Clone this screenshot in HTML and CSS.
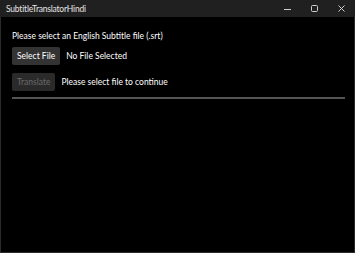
FILE: index.html
```html
<!DOCTYPE html>
<html>
<head>
<meta charset="utf-8">
<link rel="stylesheet" href="styles.css">
</head>
<body>
<div class="window">
  <div class="titlebar">
    <span class="title">SubtitleTranslatorHindi</span>
    <div class="controls">
      <span class="ctl"><svg width="10" height="10" viewBox="0 0 10 10"><path d="M1 5.5h7" stroke="#cfcfcf" stroke-width="1"/></svg></span>
      <span class="ctl"><svg width="10" height="10" viewBox="0 0 10 10"><rect x="1.5" y="1.5" width="6" height="6" rx="1" fill="none" stroke="#cfcfcf" stroke-width="1"/></svg></span>
      <span class="ctl"><svg width="10" height="10" viewBox="0 0 10 10"><path d="M1.5 1.5l6 6M7.5 1.5l-6 6" stroke="#cfcfcf" stroke-width="1"/></svg></span>
    </div>
  </div>
  <div class="content">
    <div class="prompt">Please select an English Subtitle file (.srt)</div>
    <div class="row">
      <button class="btn">Select File</button>
      <span class="status">No File Selected</span>
    </div>
    <div class="row">
      <button class="btn disabled">Translate</button>
      <span class="status">Please select file to continue</span>
    </div>
    <div class="progress"></div>
  </div>
</div>
</body>
</html>
```
FILE: styles.css
```css
html, body {
  margin: 0;
  padding: 0;
  background: #000;
}
body {
  font-family: "Lato", "Open Sans", sans-serif;
  color: #fff;
}
.window {
  width: 355px;
  height: 253px;
  box-sizing: border-box;
  border: 1px solid #2b2b2b;
  border-top: none;
  display: flex;
  flex-direction: column;
  background: #000;
}
.titlebar {
  height: 17px;
  background: #202020;
  display: flex;
  align-items: center;
  justify-content: space-between;
  margin: 0 -1px;
}
.title {
  font-size: 8.5px;
  color: #e6e6e6;
  padding-left: 6px;
  letter-spacing: -0.2px;
}
.controls {
  display: flex;
  height: 100%;
}
.ctl {
  width: 27px;
  display: flex;
  align-items: center;
  justify-content: center;
}
.content {
  padding: 12px 9px 0 11px;
  display: flex;
  flex-direction: column;
}
.prompt {
  font-size: 8.5px;
  line-height: 12px;
  margin-top: 1px;
}
.row {
  display: flex;
  align-items: center;
  margin-top: 5px;
  gap: 6px;
}
.row + .row { margin-top: 8px; }
.btn {
  font-family: inherit;
  font-size: 8.5px;
  height: 18px;
  padding: 0 5px;
  border: none;
  background: #333333;
  color: #fff;
  border-radius: 2px;
}
.btn.disabled {
  background: #2a2a2a;
  color: #6a6a6a;
}
.status {
  font-size: 8.5px;
}
.progress {
  margin-top: 6px;
  height: 2px;
  background: #555;
}
```
